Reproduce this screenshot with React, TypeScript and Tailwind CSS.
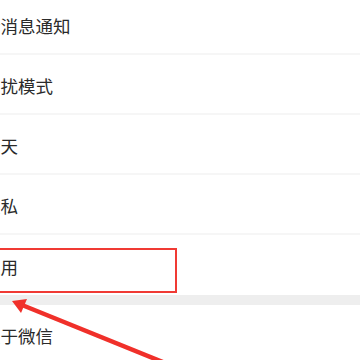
const rows = ["新消息通知", "勿扰模式", "聊天", "隐私", "通用"];

function Row({ label, last }: { label: string; last?: boolean }) {
  return (
    <div
      className={
        "relative flex h-[60px] items-center overflow-hidden pt-[4px] " +
        (last ? "" : "border-b-2 border-[#f6f6f6]")
      }
    >
      <span className="-ml-[17px] whitespace-nowrap text-[17.5px] text-[#2a2a2a]">{label}</span>
    </div>
  );
}

export default function App() {
  return (
    <div
      className="relative h-[360px] w-[360px] overflow-hidden bg-white"
      style={{ fontFamily: '"Noto Sans CJK SC", "Noto Sans", sans-serif' }}
    >
      <div className="-mt-[5px]">
        {rows.map((r, i) => (
          <Row key={r} label={r} last={i === rows.length - 1} />
        ))}
        <div className="h-[10px] bg-[#eeeeee]" />
        <Row label="关于微信" />
      </div>

      {/* annotation box */}
      <div className="absolute left-[-10px] top-[248px] h-[45px] w-[187px] border-2 border-[#f03a34]" />

      {/* annotation arrow */}
      <svg className="absolute left-0 top-0" width="360" height="360" viewBox="0 0 360 360">
        <line x1="22" y1="305" x2="175" y2="367" stroke="#f0302a" strokeWidth="4.5" />
        <polygon points="12,301 27,299 21,313" fill="#f0302a" />
      </svg>
    </div>
  );
}
